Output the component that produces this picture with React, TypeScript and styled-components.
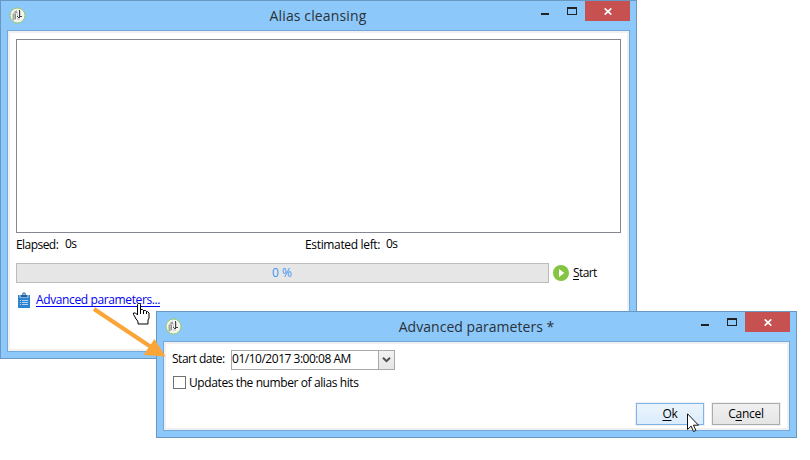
import React from 'react';
import styled, { createGlobalStyle } from 'styled-components';

const Global = createGlobalStyle`
  * { box-sizing: border-box; }
  body { margin: 0; background: #fff; font-family: "Open Sans", "Noto Sans", sans-serif; font-size: 12px; color: #000; }
  svg { display: block; flex: none; }
`;

const Desktop = styled.main`
  position: relative;
  width: 810px;
  height: 460px;
  overflow: hidden;
`;

const Window = styled.section<{ $x: number; $y: number; $w: number; $h: number }>`
  position: absolute;
  left: ${p => p.$x}px;
  top: ${p => p.$y}px;
  width: ${p => p.$w}px;
  height: ${p => p.$h}px;
  display: flex;
  flex-direction: column;
  padding: 0 6px 6px;
  background: #8cc8fa;
  border: 1px solid #6b98c2;
`;

const TitleBar = styled.header`
  display: grid;
  grid-template-columns: 124px 1fr 124px;
  height: 29px;
  flex: none;
`;

const AppIcon = styled.div`
  padding: 6px 0 0 2px;
`;

const Title = styled.h1<{ $ls: number; $pr?: number }>`
  margin: 0;
  padding-right: ${p => p.$pr || 0}px;
  font-size: 14px;
  font-weight: 400;
  line-height: 29px;
  text-align: center;
  white-space: nowrap;
  letter-spacing: ${p => p.$ls}px;
  color: #2b3238;
`;

const Controls = styled.div`
  display: flex;
  justify-content: flex-end;
  align-items: flex-start;
`;

const CloseButton = styled.button`
  display: flex;
  align-items: center;
  justify-content: center;
  width: 45px;
  height: 20px;
  padding: 1px 0 0 1px;
  border: 0;
  background: #c75050;
`;

const Body = styled.div<{ $pad: string }>`
  flex: 1;
  min-height: 0;
  display: flex;
  flex-direction: column;
  padding: ${p => p.$pad};
  background: #fff;
  border: 1px solid #72a8dc;
  box-shadow: inset 0 0 0 2px #f0f0f0;
`;

const Log = styled.div`
  height: 194px;
  flex: none;
  border: 1px solid #828790;
`;

const Row = styled.div<{ $h: number; $mt?: number; $indent?: number }>`
  display: flex;
  align-items: center;
  flex: none;
  height: ${p => p.$h}px;
  margin-top: ${p => p.$mt || 0}px;
  padding-left: ${p => p.$indent || 0}px;
`;

const Text = styled.span<{ $w?: number; $ls?: number; $up?: number }>`
  flex: none;
  width: ${p => (p.$w ? p.$w + 'px' : 'auto')};
  padding-bottom: ${p => (p.$up || 0) * 2}px;
  font-size: 12px;
  line-height: 16px;
  white-space: nowrap;
  letter-spacing: ${p => p.$ls || 0}px;
`;

const Progress = styled.div`
  display: flex;
  align-items: center;
  justify-content: center;
  width: 533px;
  height: 20px;
  margin-right: 4px;
  padding-right: 1px;
  background: #e6e6e6;
  border: 1px solid #bcbcbc;
  color: #3c94f2;
`;

const StartButton = styled.div`
  display: flex;
  align-items: center;
  gap: 4px;
`;

const Mnemonic = styled.span`
  text-decoration: underline;
  text-decoration-thickness: 1px;
  text-underline-offset: 2px;
  text-decoration-skip-ink: none;
`;

const Link = styled.a`
  margin-left: 6px;
  font-size: 12px;
  line-height: 16px;
  letter-spacing: -0.38px;
  white-space: nowrap;
  color: #0000f0;
  text-decoration: underline;
  text-decoration-thickness: 1px;
  text-underline-offset: 2px;
  text-decoration-skip-ink: none;
`;

const DateField = styled.div`
  display: flex;
  width: 164px;
  height: 20px;
  border: 1px solid #a9a9a9;
`;

const DateValue = styled.div`
  flex: 1;
  font-size: 12px;
  line-height: 16px;
  letter-spacing: -0.48px;
  white-space: nowrap;
`;

const DropButton = styled.div`
  display: flex;
  align-items: center;
  justify-content: center;
  width: 16px;
  border-left: 1px solid #a9a9a9;
  background: linear-gradient(#f2f2f2, #e6e6e6);
`;

const Checkbox = styled.span`
  width: 13px;
  height: 13px;
  margin: 0 3px 0 1px;
  border: 1px solid #707070;
  background: #fff;
`;

const Footer = styled.footer`
  display: flex;
  justify-content: flex-end;
  gap: 8px;
  margin-top: auto;
`;

const Button = styled.button<{ $active?: boolean }>`
  width: 68px;
  height: 22px;
  padding: 0 0 1px;
  font: 12px/16px "Open Sans", "Noto Sans", sans-serif;
  letter-spacing: -0.25px;
  color: #000;
  border: 1px solid ${p => (p.$active ? '#7eb4ea' : '#acacac')};
  background: ${p => (p.$active ? 'linear-gradient(#ebf4fc, #dcecfc)' : 'linear-gradient(#f0f0f0, #e5e5e5)')};
  box-shadow: 0 0 0 1px #f0f0f0;
`;

const Overlay = styled.svg<{ $x: number; $y: number }>`
  position: absolute;
  left: ${p => p.$x}px;
  top: ${p => p.$y}px;
`;

const Logo = () => (
  <svg width="17" height="17" viewBox="0 0 17 17">
    <circle cx="8.5" cy="8.5" r="7.5" fill="#f4f5f2" stroke="#9acb5c" />
    <path d="M3.500 7 5.500 5.500v7.500l-2 .5z" fill="#a4a8a3" />
    <path d="M5 4.500 8 3v3L6.500 7v6H5z" fill="#b9bdb8" />
    <path d="M6 4.500h2v1H6zM6 7h1v5H6z" fill="#868b86" />
    <path d="M10 3h1v7h-1zM8 9h1v1H8zM9 10h2v1H9zM11 9h2v1h-2z" fill="#3f443f" />
    <path d="M11.500 4v5M8.500 5v4" stroke="#d0d3cf" />
    <path d="M8 12h3" stroke="#b5b9b4" />
  </svg>
);

const WindowControls = () => (
  <Controls>
    <svg width="44" height="20" viewBox="0 0 44 20" shapeRendering="crispEdges">
      <path d="M0 12h8v2H0z" fill="#222" />
      <path d="M26 6h10v8H26zM27 8v5h8V8z" fill="#222" fillRule="evenodd" />
    </svg>
    <CloseButton aria-label="Close">
      <svg width="8" height="7" viewBox="0 0 8 7">
        <path d="M.7.4 7.300 6.600M7.300.4.7 6.600" stroke="#fff" strokeWidth="1.700" />
      </svg>
    </CloseButton>
  </Controls>
);

const Clipboard = () => (
  <svg width="12" height="16" viewBox="0 0 12 16">
    <path d="M0 3h12v13H0z" fill="#2d83d0" />
    <path d="M1.500 3h9v2.500h-9z" fill="#d5e6f5" />
    <path d="M2.500 3h1.700Q4.200.3 6 .3T7.800 3h1.700v2h-7z" fill="#1f5f9e" />
    <circle cx="6" cy="2.300" r=".8" fill="#fff" />
    <path d="M2 8.500h1M4 8.500h6M2 10.500h1M4 10.500h6M2 12.500h1M4 12.500h6" stroke="#c4def5" strokeWidth=".9" />
  </svg>
);

export default function App() {
  return (
    <Desktop>
      <Global />
      <Window $x={0} $y={0} $w={637} $h={359}>
        <TitleBar>
          <AppIcon><Logo /></AppIcon>
          <Title $ls={0.13} $pr={1}>Alias cleansing</Title>
          <WindowControls />
        </TitleBar>
        <Body $pad="8px 8px 0">
          <Log />
          <Row $h={16} $mt={4}>
            <Text $w={49} $ls={-0.55}>Elapsed:</Text>
            <Text $w={240} $up={1} $ls={-0.7}>0s</Text>
            <Text $w={81} $ls={-0.34}>Estimated left:</Text>
            <Text $up={1} $ls={-0.5}>0s</Text>
          </Row>
          <Row $h={20} $mt={10}>
            <Progress><Text>0 %</Text></Progress>
            <StartButton>
              <svg width="16" height="16" viewBox="0 0 16 16">
                <circle cx="8" cy="8" r="8" fill="#84c441" />
                <path d="M6 4v8l5.300-4z" fill="#fff" />
              </svg>
              <Text $ls={-0.6}><Mnemonic>S</Mnemonic>tart</Text>
            </StartButton>
          </Row>
          <Row $h={16} $mt={9} $indent={2}>
            <Clipboard />
            <Link>Advanced parameters...</Link>
          </Row>
        </Body>
      </Window>

      <Window $x={156} $y={311} $w={641} $h={127}>
        <TitleBar>
          <AppIcon><Logo /></AppIcon>
          <Title $ls={0.04}>Advanced parameters *</Title>
          <WindowControls />
        </TitleBar>
        <Body $pad="8px 9px 5px 8px">
          <Row $h={20}>
            <Text $w={59} $up={1} $ls={-0.48}>Start date:</Text>
            <DateField>
              <DateValue>01/10/2017 3:00:08 AM</DateValue>
              <DropButton>
                <svg width="9" height="6" viewBox="0 0 9 6">
                  <path d="M1 .8 4.500 4.200 8 .8" fill="none" stroke="#505050" strokeWidth="2" />
                </svg>
              </DropButton>
            </DateField>
          </Row>
          <Row $h={15} $mt={5}>
            <Checkbox />
            <Text $ls={-0.4}>Updates the number of alias hits</Text>
          </Row>
          <Footer>
            <Button $active><Mnemonic>O</Mnemonic>k</Button>
            <Button>C<Mnemonic>a</Mnemonic>ncel</Button>
          </Footer>
        </Body>
      </Window>

      <Overlay $x={90} $y={304} width="80" height="60" viewBox="90 304 80 60">
        <path d="M94 309 151 347" stroke="#faa537" strokeWidth="4" />
        <path d="M154.500 339 165.500 356.500 143.500 355z" fill="#faa537" />
      </Overlay>
      <Overlay $x={133} $y={303} width="18" height="23" viewBox="0 0 18 23">
        <path
          d="M5.500.5h1l1 1v5h2l1 1h2l1 1h1l1.500 1.500v5l-1 2v4h-10v-2l-1-2-1-1-1-2-1.500-2.500v-1.500h2l2 2v-10.500z"
          fill="#fff" stroke="#000"
        />
        <path d="M7.500 6v5M10.500 7.500v3.500M13.500 8.500v2.500" stroke="#000" />
      </Overlay>
      <Overlay $x={687} $y={413} width="13" height="20" viewBox="0 0 13 20">
        <path d="M.5.8v15.700l3.600-3.400 2.400 5.400 2.400-1-2.400-5.300h5z" fill="#fff" stroke="#111" />
      </Overlay>
    </Desktop>
  );
}
